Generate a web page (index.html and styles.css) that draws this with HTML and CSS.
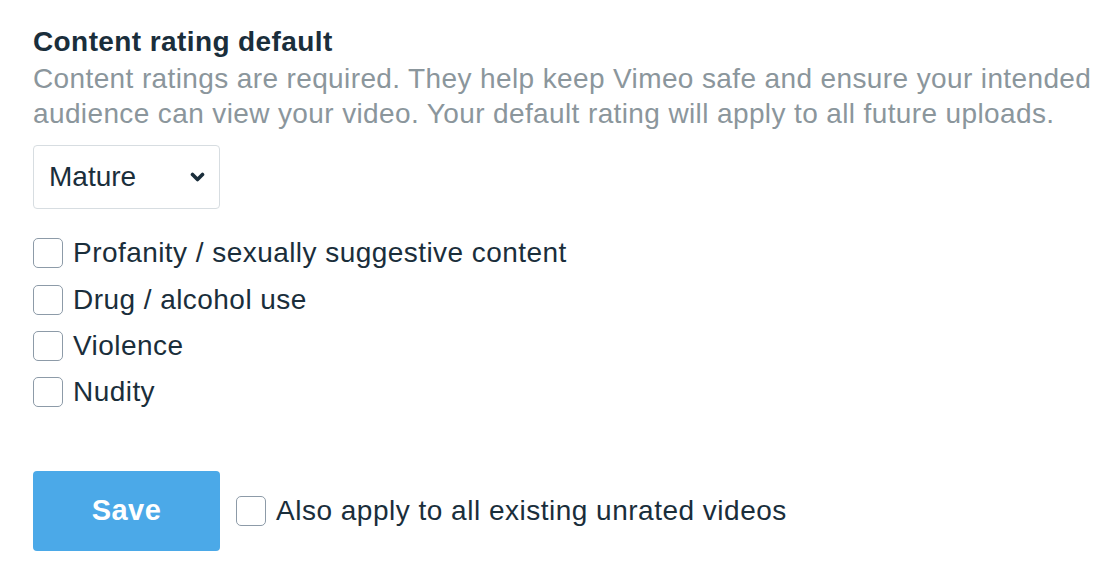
FILE: index.html
```html
<!DOCTYPE html>
<html lang="en">
<head>
    <meta charset="utf-8" />
    <title>Content rating default</title>
    <link rel="stylesheet" href="styles.css">
</head>
<body>
    <main class="rating">
        <h3 class="rating-title">Content rating default</h3>
        <p class="rating-desc">Content ratings are required. They help keep Vimeo safe and ensure your intended audience can view your video. Your default rating will apply to all future uploads.</p>

        <div class="select">
            <span>Mature</span>
            <svg class="chevron" width="15" height="10" viewBox="0 0 15 10">
                <path d="M2.5 2.5 L7.5 7.5 L12.5 2.5" fill="none" stroke="#1a2e3b" stroke-width="3.6" stroke-linecap="round" stroke-linejoin="round" />
            </svg>
        </div>

        <ul class="checks">
            <li><span class="box"></span>Profanity / sexually suggestive content</li>
            <li><span class="box"></span>Drug / alcohol use</li>
            <li><span class="box"></span>Violence</li>
            <li><span class="box"></span>Nudity</li>
        </ul>

        <footer class="actions">
            <button class="save">Save</button>
            <label class="apply"><span class="box"></span>Also apply to all existing unrated videos</label>
        </footer>
    </main>
</body>
</html>
```

FILE: styles.css
```css
html {
    font-family: Helvetica, 'Liberation Sans', Arial, sans-serif;
    color: #1a2e3b;
}

body {
    margin: 0;
    background: #fff;
}

ul,
li,
p,
h3 {
    margin: 0;
    padding: 0;
}

.rating {
    padding: 26px 33px 0;
}

.rating-title {
    font-size: 28px;
    font-weight: bold;
    line-height: 32px;
    letter-spacing: 0.4px;
}

.rating-desc {
    margin-top: 3px;
    font-size: 28px;
    line-height: 35px;
    letter-spacing: 0.38px;
    color: #8b969c;
    width: 1075px;
}

.select {
    margin-top: 14px;
    width: 187px;
    height: 64px;
    box-sizing: border-box;
    border: 1px solid #d7dde1;
    border-radius: 4px;
    display: flex;
    align-items: center;
    justify-content: space-between;
    padding: 0 14px 0 15px;
    font-size: 28px;
}

.checks {
    list-style: none;
    margin-top: 21px;
}

.checks li {
    display: flex;
    align-items: center;
    gap: 10px;
    font-size: 28px;
    letter-spacing: 0.45px;
    height: 46.4px;
}

.box {
    width: 30px;
    height: 30px;
    box-sizing: border-box;
    border: 1px solid #8d9ba8;
    border-radius: 5px;
    background: #fff;
    flex-shrink: 0;
}

.actions {
    display: flex;
    align-items: center;
    gap: 16px;
    margin-top: 55px;
}

.save {
    width: 187px;
    height: 80px;
    border: 0;
    border-radius: 4px;
    background: #4ba9e8;
    color: #fff;
    font-family: inherit;
    font-size: 29px;
    font-weight: bold;
    letter-spacing: 0.5px;
}

.apply {
    display: flex;
    align-items: center;
    gap: 10px;
    font-size: 28px;
    letter-spacing: 0.5px;
}
```
